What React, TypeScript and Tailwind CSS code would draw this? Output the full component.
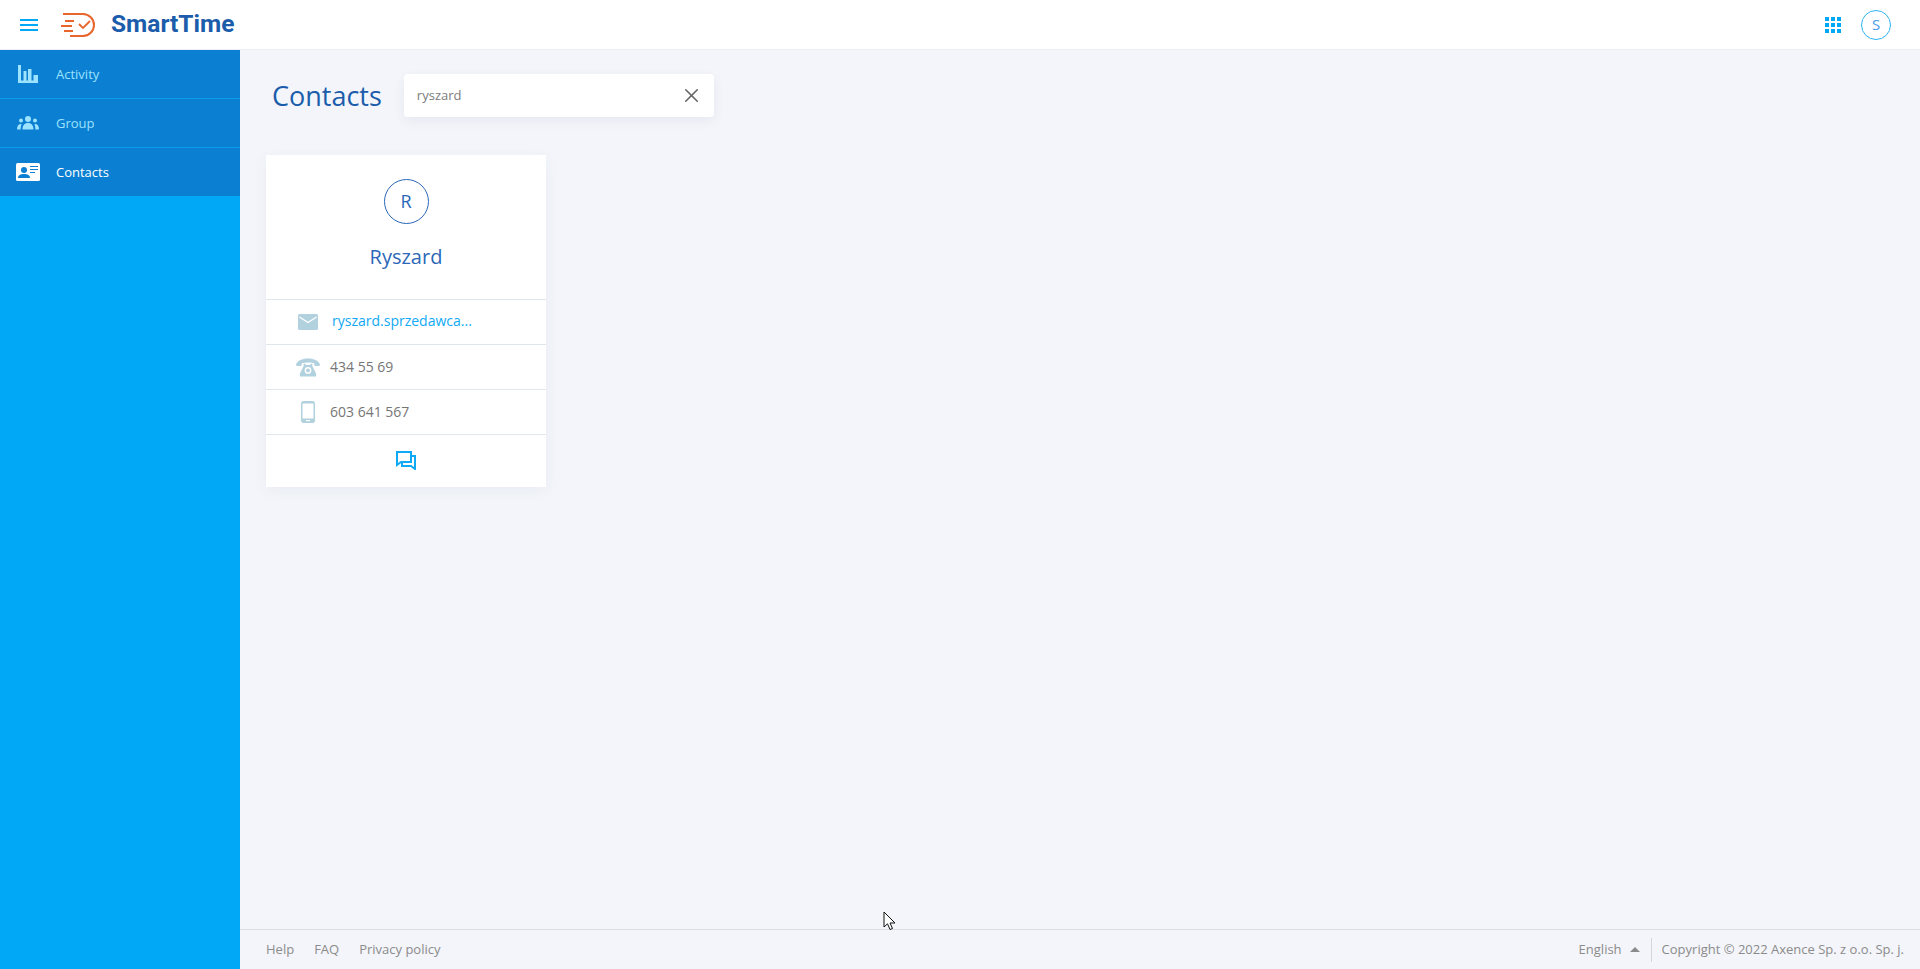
import { X } from "lucide-react"

const openSans = { fontFamily: '"Open Sans", sans-serif' }

function MenuIcon() {
  return (
    <svg width="18" height="12" viewBox="0 0 18 12" fill="#00a8f5">
      <rect y="0" width="18" height="2" />
      <rect y="5" width="18" height="2" />
      <rect y="10" width="18" height="2" />
    </svg>
  )
}

function Logo() {
  return (
    <svg width="36" height="26" viewBox="0 0 36 26" fill="none" stroke="#e8662c" strokeWidth="2">
      <path d="M3 2h20c6 0 11 5 11 11s-5 11-11 11H10" />
      <path d="M5 9h9M1 14h11M4 19h9" />
      <path d="M19 12l4 4 7-7" strokeWidth="1.8" />
    </svg>
  )
}

function ActivityIcon() {
  return (
    <svg width="20" height="18" viewBox="0 0 20 18" fill="#9be3ff">
      <path d="M0 0h3v15.500h2.500V6h3v9.500h1.500V4h3.500v11.500h2V10H20v8H0z" />
    </svg>
  )
}

function GroupIcon() {
  return (
    <svg width="22" height="14" viewBox="0 0 22 14" fill="#9be3ff">
      <circle cx="11" cy="3" r="3" />
      <circle cx="4" cy="4.500" r="2" />
      <circle cx="18" cy="4.500" r="2" />
      <path d="M5.500 13.500c0-4 2-6.500 5.500-6.500s5.500 2.500 5.500 6.500zM0 13.500c0-3 1-5 3-5.500 1 0 1.500.2 1.500.2-.6 1.500-.9 3.200-.9 5.300zM22 13.500c0-3-1-5-3-5.500-1 0-1.500.2-1.500.2.600 1.500.9 3.200.9 5.300z" />
    </svg>
  )
}

function ContactsIcon() {
  return (
    <svg width="24" height="18" viewBox="0 0 24 18">
      <rect width="24" height="18" rx="1.500" fill="#fff" />
      <circle cx="8" cy="7" r="3" fill="#0b7fd1" />
      <path d="M2 15c0-3 2.500-4 6-4s6 1 6 4z" fill="#0b7fd1" />
      <path d="M14 3.500h8M14 6.500h8M14 9.500h5" stroke="#0b7fd1" strokeWidth="1.200" />
    </svg>
  )
}

function MailIcon() {
  return (
    <svg width="20" height="16" viewBox="0 0 20 16">
      <rect width="20" height="16" rx="1.500" fill="#b2d1df" />
      <path d="M1.500 3l8.500 5.500L18.500 3" fill="none" stroke="#fff" strokeWidth="1.400" />
    </svg>
  )
}

function PhoneIcon() {
  return (
    <svg width="24" height="19" viewBox="0 0 25 19" fill="#b2d1df">
      <path d="M0 6.500C1 2.500 6 0 12.500 0S24 2.500 25 6.500c0 1-.5 1.500-1.500 1.500h-3c-1 0-1.500-.5-1.500-1.500V5c-3-1-9-1-13 0v1.500C6 7.500 5.500 8 4.500 8h-3C.5 8 0 7.500 0 6.500z" />
      <path d="M8 5.500h2V7h5V5.500h2V8l4 8v2c0 .6-.4 1-1 1H5c-.6 0-1-.4-1-1v-2l4-8z" />
      <circle cx="12.500" cy="12.500" r="3.500" fill="#fff" />
      <circle cx="12.500" cy="12.500" r="2" />
    </svg>
  )
}

function MobileIcon() {
  return (
    <svg width="14" height="22" viewBox="0 0 14 22">
      <rect x="0" y="0" width="14" height="22" rx="2.500" fill="#b2d1df" />
      <rect x="1.500" y="2.500" width="11" height="15" fill="#fff" />
      <rect x="5" y="19" width="4" height="1.200" fill="#fff" />
    </svg>
  )
}

function ChatIcon() {
  return (
    <svg width="20" height="19" viewBox="0 0 20 19" fill="none" stroke="#0fa9f5" strokeWidth="2">
      <path d="M1 1h14v10H5l-4 3z" />
      <path d="M15 5h4v13l-4-3H6v-4" />
    </svg>
  )
}

function AppsIcon() {
  return (
    <svg width="16" height="16" viewBox="0 0 16 16" fill="#00a8f5">
      <rect x="0" y="0" width="4" height="4" />
      <rect x="6" y="0" width="4" height="4" />
      <rect x="12" y="0" width="4" height="4" />
      <rect x="0" y="6" width="4" height="4" />
      <rect x="6" y="6" width="4" height="4" />
      <rect x="12" y="6" width="4" height="4" />
      <rect x="0" y="12" width="4" height="4" />
      <rect x="6" y="12" width="4" height="4" />
      <rect x="12" y="12" width="4" height="4" />
    </svg>
  )
}

const navItems = [
  { label: "Activity", icon: <ActivityIcon />, active: false },
  { label: "Group", icon: <GroupIcon />, active: false },
  { label: "Contacts", icon: <ContactsIcon />, active: true },
]

export default function App() {
  return (
    <div className="relative flex h-[969px] flex-col overflow-hidden bg-[#f3f5fa]" style={openSans}>
      {/* HEADER */}
      <header className="flex h-[50px] items-center border-b border-[#eceef3] bg-white">
        <div className="ml-[20px] flex">
          <MenuIcon />
        </div>
        <div className="ml-[22px] mt-[1px]">
          <Logo />
        </div>
        <span className="ml-[15px] text-[24.500px] font-bold text-[#1b5cab]" style={{ fontFamily: "Roboto, sans-serif" }}>
          SmartTime
        </span>
        <div className="ml-auto mr-[29px] flex items-center gap-[20px]">
          <AppsIcon />
          <div className="flex h-[30px] w-[30px] items-center justify-center rounded-full border border-[#2fb4f4] text-[15px] text-[#4a9be8]">
            S
          </div>
        </div>
      </header>

      <div className="flex min-h-0 flex-1">
        {/* SIDEBAR */}
        <aside className="w-[240px] shrink-0 bg-[#00a8f5]">
          {navItems.map((item) => (
            <div
              key={item.label}
              className="flex h-[49px] items-center border-b border-[#0a9bec] bg-[#0b7fd1] last:h-[48px] last:border-b-0"
            >
              <div className="flex w-[56px] justify-center">{item.icon}</div>
              <span className={`pt-[2px] text-[13px] ${item.active ? "text-white" : "text-[#9be3ff]"}`}>{item.label}</span>
            </div>
          ))}
        </aside>

        <main className="flex min-w-0 flex-1 flex-col">
          <div className="flex-1 pl-[26px] pt-[24px]">
            {/* TITLE + SEARCH */}
            <div className="flex items-start">
              <h1 className="ml-[6px] mt-[4px] text-[27px] leading-[36px] text-[#1b5cab]">Contacts</h1>
              <div className="ml-[22px] flex h-[43px] w-[310px] items-center justify-between rounded-[4px] bg-white pl-[13px] pr-[11px] shadow-[0_4px_12px_rgba(50,70,110,0.07)]">
                <span className="text-[13px] text-[#7c7c7c]">ryszard</span>
                <X size={23} strokeWidth={1.700} className="text-[#666]" />
              </div>
            </div>

            {/* CONTACT CARD */}
            <div className="mt-[38px] w-[280px] bg-white shadow-[0_4px_14px_rgba(50,70,110,0.05)]">
              <div className="flex h-[145px] flex-col items-center border-b border-[#dfe6ec] pt-[24px]">
                <div className="flex h-[45px] w-[45px] items-center justify-center rounded-full border border-[#2b68b8] text-[18px] text-[#2b68b8]">
                  R
                </div>
                <div className="mt-[18px] text-[20px] text-[#2b68b8]">Ryszard</div>
              </div>
              <div className="flex h-[45px] items-center border-b border-[#dfe6ec]">
                <div className="ml-[30px] flex w-[24px] justify-center">
                  <MailIcon />
                </div>
                <span className="ml-[12px] pb-[4px] text-[14px] text-[#0fa9f5]">ryszard.sprzedawca...</span>
              </div>
              <div className="flex h-[45px] items-center border-b border-[#dfe6ec]">
                <div className="ml-[30px] flex w-[24px] justify-center">
                  <PhoneIcon />
                </div>
                <span className="ml-[10px] pb-[2px] text-[14px] text-[#767676]">434 55 69</span>
              </div>
              <div className="flex h-[45px] items-center border-b border-[#dfe6ec]">
                <div className="ml-[30px] flex w-[24px] justify-center">
                  <MobileIcon />
                </div>
                <span className="ml-[10px] pb-[2px] text-[14px] text-[#767676]">603 641 567</span>
              </div>
              <div className="flex h-[52px] items-center justify-center pb-[1px]">
                <ChatIcon />
              </div>
            </div>
          </div>

          {/* FOOTER */}
          <footer className="flex h-[40px] items-center justify-between border-t border-[#d8dce3] pl-[26px] pr-[16px] text-[13px] text-[#8b8b8b]">
            <div className="flex gap-[20px]">
              <span>Help</span>
              <span>FAQ</span>
              <span>Privacy policy</span>
            </div>
            <div className="flex items-center">
              <span>English</span>
              <span className="ml-[8px] h-0 w-0 border-x-[5px] border-b-[5px] border-x-transparent border-b-[#8b8b8b]" />
              <span className="ml-[11px] h-[24px] w-px bg-[#d3d6dc]" />
              <span className="ml-[10px]">Copyright © 2022 Axence Sp. z o.o. Sp. j.</span>
            </div>
          </footer>
        </main>
      </div>

      {/* MOUSE POINTER */}
      <svg className="absolute left-[883px] top-[911px]" width="13" height="20" viewBox="0 0 13 20">
        <path d="M1 1v15l3.500-3.200L7 18.500l2.500-1-2.500-5.500h5z" fill="#fff" stroke="#111" strokeWidth="1" />
      </svg>
    </div>
  )
}
